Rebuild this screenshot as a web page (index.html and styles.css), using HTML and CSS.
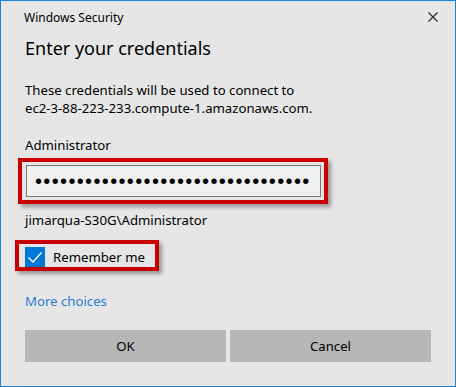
FILE: index.html
```html
<!DOCTYPE html>
<html lang="en">
<head>
    <meta charset="UTF-8">
    <title>Windows Security</title>
    <link rel="stylesheet" href="styles.css">
</head>
<body>
    <div class="window">
        <div class="title-bar">
            <span class="title">Windows Security</span>
            <svg class="close" width="10" height="10" viewBox="0 0 10 10">
                <path d="M0.5 0.5 L9.5 9.5 M9.5 0.5 L0.5 9.5" stroke="#222" stroke-width="1.1" fill="none"/>
            </svg>
        </div>
        <div class="content">
            <h1 class="heading">Enter your credentials</h1>
            <p class="info">These credentials will be used to connect to<br>ec2-3-88-223-233.compute-1.amazonaws.com.</p>
            <div class="label">Administrator</div>
            <div class="highlight field-box">
                <div class="password">
                    <span class="dots">•••••••••••••••••••••••••••••••••</span>
                </div>
            </div>
            <div class="account">jimarqua-S30G\Administrator</div>
            <div class="highlight remember-box">
                <span class="checkbox">
                    <svg width="20" height="20" viewBox="0 0 20 20">
                        <path d="M3.5 10.5 L8 15 L16.5 5.5" stroke="#fff" stroke-width="1.3" fill="none"/>
                    </svg>
                </span>
                <span class="remember-text">Remember me</span>
            </div>
            <a href="#" class="more">More choices</a>
            <div class="buttons">
                <button class="btn">OK</button>
                <button class="btn">Cancel</button>
            </div>
        </div>
    </div>
</body>
</html>
```

FILE: styles.css
```css
* {
    margin: 0;
    padding: 0;
    box-sizing: border-box;
}
body {
    font-family: "Segoe UI", "Noto Sans", sans-serif;
    background: #e6e6e6;
    color: #000;
}
.window {
    width: 456px;
    height: 387px;
    background: #e6e6e6;
    border: 1px solid #1883d7;
    display: flex;
    flex-direction: column;
}
.title-bar {
    height: 32px;
    display: flex;
    align-items: center;
    justify-content: space-between;
    padding: 0 17px 0 23px;
}
.title {
    font-size: 12px;
    color: #000;
}
.close {
    display: block;
}
.content {
    padding: 0 24px;
    display: flex;
    flex-direction: column;
    font-size: 13.2px;
    line-height: 18px;
}
.heading {
    font-size: 18px;
    font-weight: normal;
    line-height: 24px;
    margin-top: 3px;
}
.info {
    margin-top: 21px;
}
.label {
    margin-top: 19px;
}
.highlight {
    border: 4px solid #c80000;
    box-shadow: 3px 3px 4px rgba(0, 0, 0, 0.35);
    align-self: flex-start;
    margin-left: -7px;
}
.field-box {
    margin-top: 4px;
    padding: 3px 3px 3px 4px;
}
.password {
    width: 295px;
    height: 32px;
    background: #f0f0f0;
    border: 1px solid #7a7a7a;
    display: flex;
    align-items: center;
    padding-left: 8px;
}
.dots {
    font-family: "Liberation Sans", sans-serif;
    font-size: 20px;
    letter-spacing: 1.35px;
    line-height: 20px;
}
.account {
    margin-top: 7px;
}
.remember-box {
    margin-top: 11px;
    margin-left: -10px;
    height: 31px;
    display: flex;
    align-items: flex-start;
    padding: 3px 10px 0 6px;
}
.checkbox {
    width: 20px;
    height: 20px;
    background: #0078d7;
    display: block;
}
.checkbox svg {
    display: block;
}
.remember-text {
    margin-left: 8px;
    line-height: 20px;
}
.more {
    margin-top: 21px;
    color: #2b7cd3;
    text-decoration: none;
    align-self: flex-start;
}
.buttons {
    margin-top: 20px;
    display: flex;
    gap: 4px;
}
.btn {
    flex: 1;
    height: 32px;
    background: #b7b7b7;
    border: none;
    font-family: inherit;
    font-size: 13.2px;
    color: #000;
}
```
